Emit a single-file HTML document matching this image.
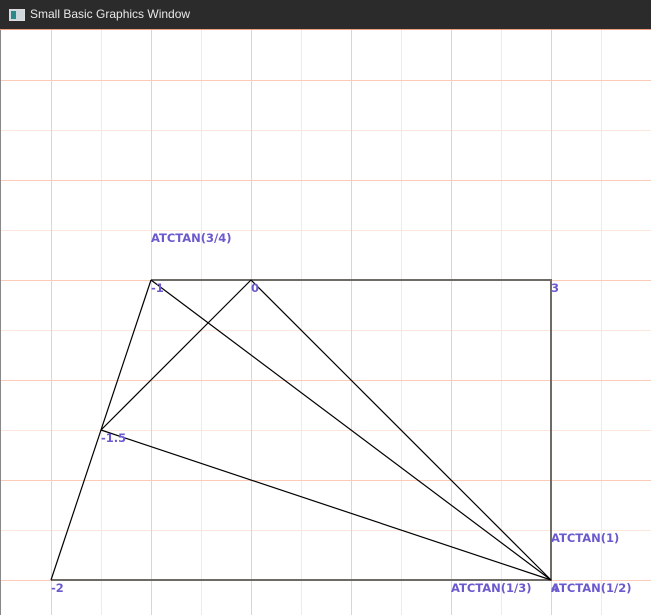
<!DOCTYPE html>
<html><head><style>
body{margin:0;width:651px;height:615px;overflow:hidden;background:#fff;font-family:"Liberation Sans",sans-serif}
#tb{position:absolute;left:0;top:0;width:651px;height:30px;background:#2b2b2b;border-bottom:1px solid #f0a080;box-sizing:border-box}
#tb span{position:absolute;left:30px;top:7px;color:#e8e8e8;font-size:12px}
#ic{position:absolute;left:9px;top:9px;width:14px;height:10px;background:#cfd8dc;border:1px solid #ddd}
#ic:before{content:"";position:absolute;left:1px;top:1px;width:5px;height:8px;background:#2a8a8a}
svg{position:absolute;left:0;top:0}
.l{font-family:"DejaVu Sans","Liberation Sans",sans-serif;font-weight:bold;font-size:11.5px;fill:#6a5acd}
</style></head><body>
<svg width="651" height="615">
<g stroke="#fde6dc" stroke-width="1">
<line x1="101.5" y1="30" x2="101.5" y2="615"/><line x1="201.5" y1="30" x2="201.5" y2="615"/><line x1="301.5" y1="30" x2="301.5" y2="615"/><line x1="401.5" y1="30" x2="401.5" y2="615"/><line x1="501.5" y1="30" x2="501.5" y2="615"/><line x1="601.5" y1="30" x2="601.5" y2="615"/>
<line x1="0" y1="130.5" x2="651" y2="130.5"/><line x1="0" y1="230.5" x2="651" y2="230.5"/><line x1="0" y1="330.5" x2="651" y2="330.5"/><line x1="0" y1="430.5" x2="651" y2="430.5"/><line x1="0" y1="530.5" x2="651" y2="530.5"/>
</g>
<g stroke="#fccbb8" stroke-width="1">
<line x1="51.5" y1="30" x2="51.5" y2="615"/><line x1="151.5" y1="30" x2="151.5" y2="615"/><line x1="251.5" y1="30" x2="251.5" y2="615"/><line x1="351.5" y1="30" x2="351.5" y2="615"/><line x1="451.5" y1="30" x2="451.5" y2="615"/><line x1="551.5" y1="30" x2="551.5" y2="615"/>
<line x1="0" y1="80.5" x2="651" y2="80.5"/><line x1="0" y1="180.5" x2="651" y2="180.5"/><line x1="0" y1="280.5" x2="651" y2="280.5"/><line x1="0" y1="380.5" x2="651" y2="380.5"/><line x1="0" y1="480.5" x2="651" y2="480.5"/><line x1="0" y1="580.5" x2="651" y2="580.5"/>
</g>
<line x1="0.5" y1="30" x2="0.5" y2="615" stroke="#888"/>
<g stroke="#6e6a66" stroke-width="2" fill="none">
<polyline points="151,280 551,280 551,580 51,580"/>
</g>
<g stroke="#000" stroke-width="1.2" fill="none">
<line x1="51" y1="580" x2="151" y2="280"/>
<line x1="101" y1="430" x2="251" y2="280"/>
<line x1="151" y1="280" x2="551" y2="580"/>
<line x1="251" y1="280" x2="551" y2="580"/>
<line x1="101" y1="430" x2="551" y2="580"/>
</g>
<text class="l" x="151" y="242">ATCTAN(3/4)</text>
<text class="l" x="151" y="292">-1</text>
<text class="l" x="251" y="292">0</text>
<text class="l" x="551" y="292">3</text>
<text class="l" x="101" y="442">-1.5</text>
<text class="l" x="51" y="592">-2</text>
<text class="l" x="551" y="542">ATCTAN(1)</text>
<text class="l" x="451" y="592">ATCTAN(1/3)</text>
<text class="l" x="551" y="592">4</text>
<text class="l" x="551" y="592">ATCTAN(1/2)</text>
</svg>
<div id="tb"><div id="ic"></div><span>Small Basic Graphics Window</span></div>
</body></html>
